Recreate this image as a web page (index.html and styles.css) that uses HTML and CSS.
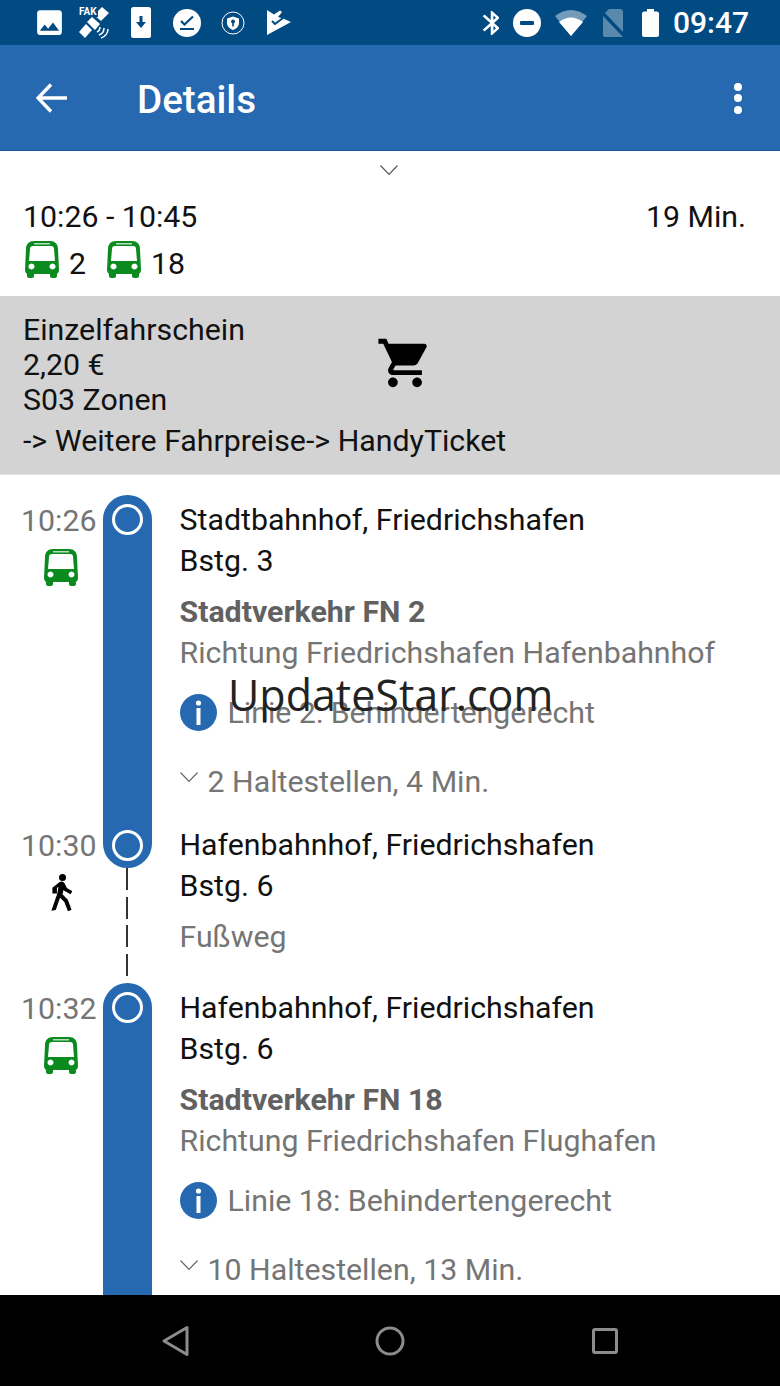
FILE: index.html
```html
<!DOCTYPE html>
<html lang="en">
<head>
    <meta charset="UTF-8">
    <meta name="viewport" content="width=device-width, initial-scale=1.0">
    <title>Details</title>
    <link rel="stylesheet" href="styles.css">
</head>
<body>
    <!-- Shared icons -->
    <svg class="defs" width="0" height="0">
        <symbol id="bus" viewBox="0 0 34 37">
            <path fill-rule="evenodd" d="M9 0h16c5 0 8 3 8 8l1 21c0 2-1 3-2 4v2c0 1-1 2-2 2h-3c-1 0-2-1-2-2v-2H9v2c0 1-1 2-2 2H4c-1 0-2-1-2-2v-2c-1-1-2-2-2-4L1 8c0-5 3-8 8-8zM4 20h26l-1-12c0-2-1-3-3-3H8C6 5 5 6 5 8zM6.500 22.500a3 3 0 1 0 .01 0zM27.500 22.500a3 3 0 1 0 .01 0z"/>
            <rect x="9" y="2" width="16" height="1.500" fill="#b8dcbd"/>
        </symbol>
        <symbol id="info" viewBox="0 0 37 37">
            <circle cx="18.500" cy="18.500" r="18.500" fill="#2769b0"/>
            <circle cx="18.500" cy="9" r="2.600" fill="#fff"/>
            <rect x="16.500" y="14" width="4" height="17" fill="#fff"/>
        </symbol>
        <symbol id="chevron" viewBox="0 0 18 11">
            <path d="M.5.500L9 9.500 17.500.500" fill="none" stroke="currentColor" stroke-width="1.200"/>
        </symbol>
    </svg>

    <div class="page">
        <!-- Status bar -->
        <div class="status-bar">
            <div class="status-left">
                <span class="slot"><svg width="33" height="33" viewBox="0 0 24 24"><path fill="#fff" fill-rule="evenodd" d="M21 19V5c0-1.100-.9-2-2-2H5c-1.100 0-2 .9-2 2v14c0 1.100.9 2 2 2h14c1.100 0 2-.9 2-2zM8.500 13.500l2.500 3.010L14.500 12l4.500 6H5l3.500-4.500z"/></svg></span>
                <span class="slot fake">
                    <span class="fake-text">FAK</span>
                    <svg width="34" height="32" viewBox="0 0 34 32"><g fill="#fff"><path d="M1 25l7-8 6 6-7 8z"/><path d="M9 15l5-5 8 7-5 6z"/><path d="M16 8l8-8 7 6-8 8z"/></g><g fill="none" stroke="#fff" stroke-width="1.500"><path d="M22 20c0 2-1 4-3 5"/><path d="M26 21c0 3-2 6-5 7"/><path d="M30 22c0 4-3 8-7 9"/></g></svg>
                </span>
                <span class="slot"><svg width="20" height="31" viewBox="0 0 20 31"><rect width="20" height="31" rx="2.500" fill="#fff"/><path d="M8.500 9h3v6h3.500L10 21 5 15h3.500z" fill="#014a82"/></svg></span>
                <span class="slot"><svg width="28" height="28" viewBox="0 0 28 28"><circle cx="14" cy="14" r="14" fill="#fff"/><path d="M8 12l3.500 3.500L20 7.500" fill="none" stroke="#014a82" stroke-width="2.200"/><rect x="7" y="19" width="14" height="2" fill="#014a82"/></svg></span>
                <span class="slot"><svg width="24" height="24" viewBox="0 0 24 24"><circle cx="12" cy="12" r="11" fill="none" stroke="#fff" stroke-width="1"/><path d="M12 5.500l6 2v4.500c0 3.500-2.500 5.500-6 7-3.500-1.500-6-3.500-6-7V7.500z" fill="#fff"/><circle cx="12" cy="10.500" r="2" fill="#014a82"/><rect x="11.200" y="11" width="1.600" height="4.500" fill="#014a82"/></svg></span>
                <span class="slot"><svg width="24" height="25" viewBox="0 0 24 25"><path d="M0 0l7 4.500L13 .5l2 1.500-4 5 5 1.500L24 12 0 25z" fill="#fff"/><path d="M5 11l3 3 8-6" fill="none" stroke="#014a82" stroke-width="2"/></svg></span>
            </div>
            <div class="status-right">
                <svg width="18" height="24" viewBox="0 0 18 24"><path fill="#fff" transform="translate(-5 -2.400) scale(1.340 1.200)" d="M17.710 7.710L12 2h-1v7.590L6.410 5 5 6.410 10.590 12 5 17.590 6.410 19 11 14.410V22h1l5.710-5.710-4.300-4.290 4.300-4.290zM13 5.830l1.880 1.880L13 9.590V5.830zm1.880 10.460L13 18.170v-3.760l1.880 1.880z"/></svg>
                <svg width="28" height="28" viewBox="0 0 28 28"><circle cx="14" cy="14" r="14" fill="#fff"/><rect x="7" y="12" width="14" height="4" rx="1" fill="#014a82"/></svg>
                <svg width="33" height="26" viewBox="0 0 33 26"><path d="M0 6Q16-6 32 6L16 26z" fill="#fff" opacity=".45"/><path d="M4 12Q16 3 28 12L16 26z" fill="#fff"/></svg>
                <svg width="26" height="28" viewBox="0 0 26 28"><path d="M7 0h11c2 0 3 1 3 3v20L3 4zM1 7l20 21H3c-2 0-2-1-2-3z" fill="#fff" opacity=".35"/></svg>
                <svg width="17" height="28" viewBox="0 0 17 28"><path d="M5 0h7v2.500h3c1 0 2 1 2 2V26c0 1-1 2-2 2H2c-1 0-2-1-2-2V4.500c0-1 1-2 2-2h3z" fill="#fff"/></svg>
                <span class="clock">09:47</span>
            </div>
        </div>

        <!-- App bar -->
        <div class="app-bar">
            <svg class="back" width="31" height="30" viewBox="0 0 31 30"><path d="M15 1.500L2 15l13 13.500M2 15h29" fill="none" stroke="#fff" stroke-width="3.400"/></svg>
            <h1>Details</h1>
            <div class="more"><i></i><i></i><i></i></div>
        </div>

        <!-- Summary -->
        <div class="summary">
            <svg class="summary-chevron"><use href="#chevron"/></svg>
            <div class="summary-row">
                <span>10:26 - 10:45</span>
                <span>19 Min.</span>
            </div>
            <div class="lines">
                <svg class="bus-icon"><use href="#bus"/></svg>
                <span class="line-no">2</span>
                <svg class="bus-icon"><use href="#bus"/></svg>
                <span class="line-no">18</span>
            </div>
        </div>

        <!-- Ticket -->
        <div class="ticket">
            <div class="ticket-top">
                <div class="ticket-text">
                    <div>Einzelfahrschein</div>
                    <div>2,20 €</div>
                    <div>S03 Zonen</div>
                </div>
                <svg class="cart" width="58" height="58" viewBox="0 0 24 24"><path d="M7 18c-1.100 0-1.990.9-1.990 2S5.900 22 7 22s2-.9 2-2-.9-2-2-2zM1 2v2h2l3.600 7.590-1.350 2.450c-.16.280-.25.610-.25.960 0 1.100.9 2 2 2h12v-2H7.420c-.14 0-.25-.11-.25-.25l.03-.12.9-1.630h7.450c.75 0 1.410-.41 1.750-1.030l3.580-6.490c.08-.14.120-.31.120-.48 0-.55-.45-1-1-1H5.210l-.94-2H1zm16 16c-1.100 0-1.990.9-1.990 2s.89 2 1.990 2 2-.9 2-2-.9-2-2-2z"/></svg>
            </div>
            <div class="ticket-link">-&gt; Weitere Fahrpreise-&gt; HandyTicket</div>
        </div>

        <!-- Route -->
        <div class="route">
            <div class="leg">
                <div class="when">
                    <span class="time">10:26</span>
                    <svg class="bus-icon"><use href="#bus"/></svg>
                </div>
                <div class="rail rail-start"><span class="dot"></span></div>
                <div class="stop">
                    <div class="name">Stadtbahnhof, Friedrichshafen</div>
                    <div class="name">Bstg. 3</div>
                    <div class="service">Stadtverkehr FN 2</div>
                    <div class="muted">Richtung Friedrichshafen Hafenbahnhof</div>
                    <div class="note">
                        <svg class="info-icon"><use href="#info"/></svg>
                        <span>Linie 2: Behindertengerecht</span>
                    </div>
                    <div class="stops">
                        <svg class="stops-chevron"><use href="#chevron"/></svg>
                        <span>2 Haltestellen, 4 Min.</span>
                    </div>
                </div>
            </div>

            <div class="leg">
                <div class="when">
                    <span class="time">10:30</span>
                    <svg class="walk-icon" viewBox="0 0 23 38"><circle cx="13.500" cy="3.500" r="3.500"/><path stroke="#000" stroke-width="1.200" d="M11 8.500c1.500-.8 3-.5 4 1l2.500 5 5 3-1.200 2-6-3.500-1-2-1.500 6.500 5.500 5.500 3.500 9.500-2.500 1-3.500-9-5-5-4.500 13-3 .5 5.500-16 1.500-8-3 1.500v5.500H4V14z"/></svg>
                </div>
                <div class="rail-walk">
                    <div class="rail rail-end"><span class="dot"></span></div>
                    <div class="dashes"></div>
                </div>
                <div class="stop">
                    <div class="name">Hafenbahnhof, Friedrichshafen</div>
                    <div class="name">Bstg. 6</div>
                    <div class="muted footpath">Fußweg</div>
                </div>
            </div>

            <div class="leg">
                <div class="when">
                    <span class="time">10:32</span>
                    <svg class="bus-icon"><use href="#bus"/></svg>
                </div>
                <div class="rail rail-start"><span class="dot"></span></div>
                <div class="stop">
                    <div class="name">Hafenbahnhof, Friedrichshafen</div>
                    <div class="name">Bstg. 6</div>
                    <div class="service">Stadtverkehr FN 18</div>
                    <div class="muted">Richtung Friedrichshafen Flughafen</div>
                    <div class="note">
                        <svg class="info-icon"><use href="#info"/></svg>
                        <span>Linie 18: Behindertengerecht</span>
                    </div>
                    <div class="stops">
                        <svg class="stops-chevron"><use href="#chevron"/></svg>
                        <span>10 Haltestellen, 13 Min.</span>
                    </div>
                </div>
            </div>
        </div>

        <!-- Navigation bar -->
        <div class="nav-bar">
            <svg width="40" height="40" viewBox="0 0 40 40"><path d="M32 6.500v27L9 20z" fill="none" stroke="#8c8c8c" stroke-width="3" stroke-linejoin="round"/></svg>
            <svg width="40" height="40" viewBox="0 0 40 40"><circle cx="20" cy="20" r="13" fill="none" stroke="#8c8c8c" stroke-width="3"/></svg>
            <svg width="40" height="40" viewBox="0 0 40 40"><rect x="8.500" y="8.500" width="23" height="23" rx="1.500" fill="none" stroke="#8c8c8c" stroke-width="3"/></svg>
        </div>

        <div class="watermark">UpdateStar.com</div>
    </div>
</body>
</html>
```

FILE: styles.css
```css
body {
    font-family: Roboto, "Liberation Sans", sans-serif;
    margin: 0;
    background-color: #fff;
    color: #111;
}

.defs {
    position: absolute;
}

.page {
    position: relative;
    width: 780px;
    height: 1386px;
    display: flex;
    flex-direction: column;
    overflow: hidden;
    font-size: 30.300px;
}

/* Status bar */
.status-bar {
    height: 45px;
    flex: none;
    display: flex;
    justify-content: space-between;
    align-items: center;
    padding: 0 31px 0 26px;
    background-color: #014a82;
}

.status-left,
.status-right {
    display: flex;
    align-items: center;
}

.status-right {
    gap: 14px;
}

.slot {
    width: 46px;
    display: flex;
    justify-content: center;
    align-items: center;
}

.fake {
    position: relative;
}

.fake-text {
    position: absolute;
    left: 7px;
    top: -1px;
    font-size: 10px;
    font-weight: 700;
    color: #fff;
    background-color: #014a82;
    padding-right: 1px;
}

.clock {
    font-size: 30px;
    font-weight: 500;
    color: #fff;
}

/* App bar */
.app-bar {
    height: 106px;
    flex: none;
    display: flex;
    align-items: center;
    padding: 1px 38px 0 36px;
    background-color: #2769b0;
    box-sizing: border-box;
    border-bottom: 1px solid #1f5a9c;
}

.back {
    flex: none;
}

.app-bar h1 {
    flex: 1;
    margin: 3px 0 0 70px;
    font-size: 38.600px;
    font-weight: 500;
    color: #fff;
}

.more {
    display: flex;
    flex-direction: column;
    gap: 3.500px;
}

.more i {
    width: 8px;
    height: 8px;
    border-radius: 50%;
    background-color: #fff;
}

/* Summary */
.summary {
    height: 145px;
    flex: none;
    box-sizing: border-box;
    padding: 14px 34px 0 23px;
    display: flex;
    flex-direction: column;
}

.summary-chevron {
    width: 18px;
    height: 11px;
    align-self: center;
    color: #555;
    margin-left: 9px;
}

.summary-row {
    display: flex;
    justify-content: space-between;
    line-height: 40px;
    margin-top: 21px;
}

.lines {
    display: flex;
    align-items: center;
    height: 40px;
    margin-top: 6px;
}

.lines .bus-icon {
    margin-top: -7px;
}

.lines .bus-icon:first-child {
    margin-left: 2px;
}

.line-no {
    margin-left: 10px;
    margin-right: 21px;
}

.bus-icon {
    width: 34px;
    height: 37px;
    fill: #0a8a1f;
    flex: none;
}

/* Ticket */
.ticket {
    height: 179px;
    flex: none;
    box-sizing: border-box;
    padding: 16px 23px 0;
    background-color: #d3d3d3;
    border-bottom: 1px solid #e2e2e2;
    line-height: 35px;
}

.ticket-top {
    display: flex;
    align-items: center;
}

.ticket-text {
    width: 353px;
}

.cart {
    margin-top: -4px;
}

.ticket-link {
    margin-top: 6px;
}

/* Route */
.route {
    flex: 1;
    min-height: 0;
    padding-top: 20px;
    overflow: hidden;
}

.leg {
    display: grid;
    grid-template-columns: 22px 81px 49px 1fr;
}

.when {
    grid-column: 2;
    display: flex;
    flex-direction: column;
    align-items: center;
    padding-top: 5px;
}

.time {
    line-height: 41px;
    color: #757575;
    width: 81px;
    margin-left: -2px;
}

.when .bus-icon {
    margin: 8px 4px 0 0;
}

.walk-icon {
    width: 23px;
    height: 38px;
    margin: 8px 4px 0 0;
}

.rail {
    width: 49px;
    background-color: #2769b0;
    display: flex;
    justify-content: center;
}

.rail-start {
    border-radius: 24.500px 24.500px 0 0;
    padding-top: 9px;
    box-sizing: border-box;
}

.rail-end {
    height: 48px;
    flex: none;
    border-radius: 0 0 24.500px 24.500px;
    padding-top: 10px;
    box-sizing: border-box;
}

.rail-walk {
    display: flex;
    flex-direction: column;
    align-items: center;
}

.dashes {
    width: 2px;
    height: 109px;
    margin-left: -1px;
    background-image: repeating-linear-gradient(#333 0 22px, transparent 22px 28.700px);
}

.dot {
    width: 31px;
    height: 31px;
    box-sizing: border-box;
    border: 3.500px solid #fff;
    border-radius: 50%;
    margin-left: -1px;
}

.stop {
    padding: 4px 0 0 27.500px;
    line-height: 41px;
    white-space: nowrap;
}

.service {
    margin-top: 10px;
    font-weight: 700;
    color: #616161;
}

.muted {
    color: #757575;
}

.footpath {
    margin: 10px 0 26px;
}

.note {
    display: flex;
    align-items: center;
    gap: 11px;
    margin-top: 19px;
    color: #757575;
}

.info-icon {
    width: 37px;
    height: 37px;
    flex: none;
}

.stops {
    display: flex;
    align-items: center;
    gap: 10px;
    margin-top: 28px;
    padding-bottom: 18px;
    color: #757575;
}

.stops-chevron {
    width: 18px;
    height: 11px;
    color: #666;
    margin-top: -8px;
}

/* Navigation bar */
.nav-bar {
    height: 91px;
    flex: none;
    display: flex;
    justify-content: center;
    align-items: center;
    gap: 175px;
    background-color: #000;
}

.watermark {
    position: absolute;
    left: 228px;
    top: 669px;
    font-family: "Open Sans", sans-serif;
    font-size: 43px;
    line-height: 52px;
    color: #222;
}
```
